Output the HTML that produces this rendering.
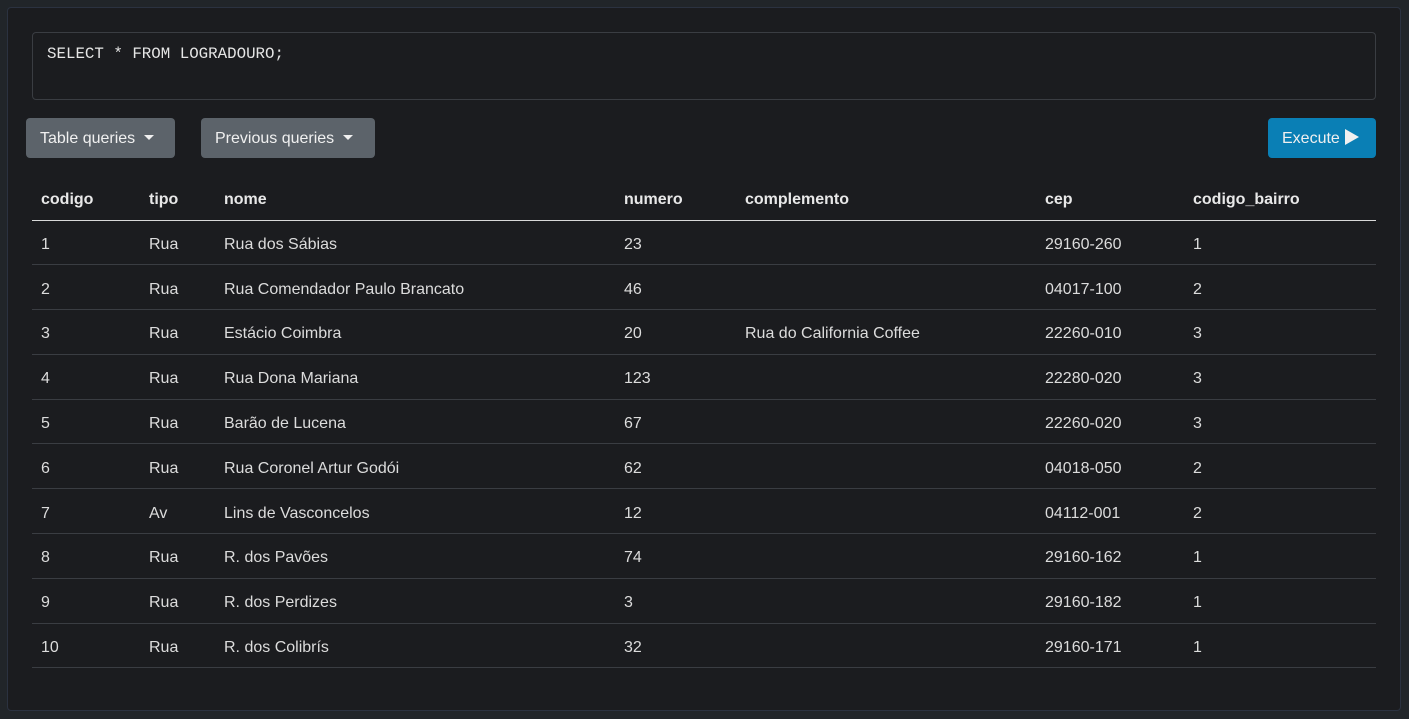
<!DOCTYPE html>
<html><head><style>
body{margin:0;width:1409px;height:719px;background:#212529;font-family:"Liberation Sans",sans-serif;color:#dee2e6;overflow:hidden;position:relative}
.panel{position:absolute;left:7px;top:7px;width:1392px;height:702px;background:#1b1c1f;border:1px solid #2b3240;border-radius:4px}
.ta{position:absolute;left:32px;top:32px;width:1342px;height:66px;border:1px solid #3a3d42;border-radius:4px;background:#1b1c1f}
.ta span{position:absolute;left:14px;top:12px;font-family:"Liberation Mono",monospace;font-size:15.8px;color:#e6e6e6}
.btn{position:absolute;top:118px;height:40px;border-radius:4px;background:#5c636a;color:#f0f0f0;font-size:16px;line-height:42px;padding:0 14px;box-sizing:border-box}
.btn i{display:inline-block;width:0;height:0;border-left:5px solid transparent;border-right:5px solid transparent;border-top:5px solid #f0f0f0;margin-left:9px;vertical-align:3px}
.ex{left:1268px;width:108px;background:#0a7fb5}
table{position:absolute;left:32px;top:176px;width:1344px;border-collapse:collapse;font-size:16px}
th{text-align:left;font-weight:bold;height:44px;padding:4px 0 0 9px;box-sizing:border-box;border-bottom:1px solid #d9d9d9;color:#e8e8e8}
td{height:44.8px;padding:5px 0 0 9px;box-sizing:border-box;border-bottom:1px solid #3a3d42;color:#dcdcdc}
</style></head><body>
<div class="panel"></div>
<div class="ta"><span>SELECT * FROM LOGRADOURO;</span></div>
<div class="btn" style="left:26px;width:149px">Table queries<i></i></div>
<div class="btn" style="left:201px;width:174px">Previous queries<i></i></div>
<div class="btn ex">Execute <svg width="16" height="18" viewBox="0 0 16 18" style="vertical-align:-3px"><path d="M1 1L15 9L1 17Z" fill="#f0f0f0"/></svg></div>
<table>
<tr><th style="width:108px">codigo</th><th style="width:75px">tipo</th><th style="width:400px">nome</th><th style="width:121px">numero</th><th style="width:300px">complemento</th><th style="width:148px">cep</th><th>codigo_bairro</th></tr>
<tr><td>1</td><td>Rua</td><td>Rua dos Sábias</td><td>23</td><td></td><td>29160-260</td><td>1</td></tr>
<tr><td>2</td><td>Rua</td><td>Rua Comendador Paulo Brancato</td><td>46</td><td></td><td>04017-100</td><td>2</td></tr>
<tr><td>3</td><td>Rua</td><td>Estácio Coimbra</td><td>20</td><td>Rua do California Coffee</td><td>22260-010</td><td>3</td></tr>
<tr><td>4</td><td>Rua</td><td>Rua Dona Mariana</td><td>123</td><td></td><td>22280-020</td><td>3</td></tr>
<tr><td>5</td><td>Rua</td><td>Barão de Lucena</td><td>67</td><td></td><td>22260-020</td><td>3</td></tr>
<tr><td>6</td><td>Rua</td><td>Rua Coronel Artur Godói</td><td>62</td><td></td><td>04018-050</td><td>2</td></tr>
<tr><td>7</td><td>Av</td><td>Lins de Vasconcelos</td><td>12</td><td></td><td>04112-001</td><td>2</td></tr>
<tr><td>8</td><td>Rua</td><td>R. dos Pavões</td><td>74</td><td></td><td>29160-162</td><td>1</td></tr>
<tr><td>9</td><td>Rua</td><td>R. dos Perdizes</td><td>3</td><td></td><td>29160-182</td><td>1</td></tr>
<tr><td>10</td><td>Rua</td><td>R. dos Colibrís</td><td>32</td><td></td><td>29160-171</td><td>1</td></tr>
</table>
</body></html>
